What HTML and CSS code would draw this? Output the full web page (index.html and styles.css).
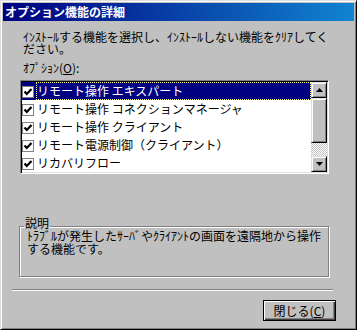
FILE: index.html
```html
<!DOCTYPE html>
<html lang="ja">
<head>
<meta charset="utf-8">
<title>オプション機能の詳細</title>
<link rel="stylesheet" href="styles.css">
</head>
<body>
<div class="window">
  <div class="titlebar">オプション機能の詳細</div>
  <div class="content">
    <p class="intro">ｲﾝｽﾄｰﾙする機能を選択し、ｲﾝｽﾄｰﾙしない機能をｸﾘｱしてく<br>ださい。</p>
    <div class="field-label">ｵﾌﾟｼｮﾝ(<u>O</u>):</div>
    <div class="listbox">
      <ul class="items">
        <li class="item selected"><span class="check"><svg width="10" height="10" viewBox="0 0 10 10"><polyline points="1.5,4.5 3.8,7 8.5,2" fill="none" stroke="#000" stroke-width="2.2"/></svg></span><span class="item-text">リモート操作 エキスパート</span></li>
        <li class="item"><span class="check"><svg width="10" height="10" viewBox="0 0 10 10"><polyline points="1.5,4.5 3.8,7 8.5,2" fill="none" stroke="#000" stroke-width="2.2"/></svg></span><span class="item-text">リモート操作 コネクションマネージャ</span></li>
        <li class="item"><span class="check"><svg width="10" height="10" viewBox="0 0 10 10"><polyline points="1.5,4.5 3.8,7 8.5,2" fill="none" stroke="#000" stroke-width="2.2"/></svg></span><span class="item-text">リモート操作 クライアント</span></li>
        <li class="item"><span class="check"><svg width="10" height="10" viewBox="0 0 10 10"><polyline points="1.5,4.5 3.8,7 8.5,2" fill="none" stroke="#000" stroke-width="2.2"/></svg></span><span class="item-text">リモート電源制御（クライアント）</span></li>
        <li class="item"><span class="check"><svg width="10" height="10" viewBox="0 0 10 10"><polyline points="1.5,4.5 3.8,7 8.5,2" fill="none" stroke="#000" stroke-width="2.2"/></svg></span><span class="item-text">リカバリフロー</span></li>
      </ul>
      <div class="scrollbar">
        <div class="sb-btn"><svg width="7" height="4" viewBox="0 0 7 4"><polygon points="3.5,0 7,4 0,4" fill="#000"/></svg></div>
        <div class="sb-thumb"></div>
        <div class="sb-track"></div>
        <div class="sb-btn"><svg width="7" height="4" viewBox="0 0 7 4"><polygon points="0,0 7,0 3.5,4" fill="#000"/></svg></div>
      </div>
    </div>
    <fieldset class="group">
      <legend class="group-label">説明</legend>
      <p class="desc">ﾄﾗﾌﾞﾙが発生したｻｰﾊﾞやｸﾗｲｱﾝﾄの画面を遠隔地から操作<br>する機能です。</p>
    </fieldset>
    <div class="separator"></div>
    <div class="footer">
      <button class="btn btn-default" type="button">閉じる(<u>C</u>)</button>
    </div>
  </div>
</div>
</body>
</html>
```
FILE: styles.css
```css
* { box-sizing: border-box; }
html, body { margin: 0; padding: 0; }
body {
  width: 357px;
  height: 330px;
  overflow: hidden;
  background: #c0c0c0;
  font-family: "Noto Sans CJK JP", sans-serif;
  font-size: 12px;
  color: #000;
}
.window {
  width: 357px;
  height: 330px;
  background: #c0c0c0;
  border: 1px solid;
  border-color: #dfdfdf #000 #000 #dfdfdf;
  box-shadow: inset 1px 1px #fff, inset -1px -1px #808080;
  padding: 2px;
}
.titlebar {
  height: 18px;
  line-height: 18px;
  padding-left: 2px;
  background: linear-gradient(to right, #000080, #1084d0);
  color: #fff;
  font-weight: bold;
  white-space: nowrap;
}
.content { padding-top: 10px; }
.intro {
  margin: 0 0 0 20px;
  line-height: 12px;
  white-space: nowrap;
}
.field-label {
  margin: 7px 0 0 20px;
  line-height: 12px;
}
.listbox {
  margin: 6px 0 0 17px;
  width: 309px;
  height: 94px;
  display: flex;
  background: #fff;
  border: 1px solid;
  border-color: #808080 #fff #fff #808080;
  box-shadow: inset 1px 1px #000, inset -1px -1px #dfdfdf;
  padding: 1px;
}
.items {
  list-style: none;
  margin: 0;
  padding: 0;
  flex: 1;
  min-width: 0;
}
.item {
  height: 18px;
  display: flex;
  align-items: center;
  white-space: nowrap;
}
.check {
  flex: none;
  width: 12px;
  height: 12px;
  margin-top: 2px;
  border: 1px solid #808080;
  background: #fff;
  display: flex;
  align-items: center;
  justify-content: center;
}
.check svg { display: block; }
.item-text {
  flex: 1;
  height: 18px;
  line-height: 18px;
  margin-left: 2px;
  padding-left: 1px;
}
.selected { background: #000080; color: #fff; }
.selected .item-text {
  outline: 1px dotted #ffff80;
  outline-offset: -1px;
}
.scrollbar {
  flex: none;
  width: 16px;
  display: flex;
  flex-direction: column;
}
.sb-btn, .sb-thumb {
  flex: none;
  background: #c0c0c0;
  border: 1px solid;
  border-color: #dfdfdf #000 #000 #dfdfdf;
  box-shadow: inset 1px 1px #fff, inset -1px -1px #808080;
}
.sb-btn {
  height: 16px;
  display: flex;
  align-items: center;
  justify-content: center;
}
.sb-btn svg { display: block; }
.sb-thumb { height: 45px; }
.sb-track {
  flex: 1;
  background: repeating-conic-gradient(#fff 0 25%, #c0c0c0 0 50%) 0 0 / 2px 2px;
}
.group {
  margin: 43px 0 0 16px;
  width: 310px;
  min-width: 0;
  padding: 0 6px 21px 7px;
  border: 1px solid #808080;
  box-shadow: inset 1px 1px #fff, 1px 1px #fff;
}
.group-label {
  margin-left: -3px;
  padding: 0 1px 6px;
  line-height: 12px;
  background: #c0c0c0;
  background-clip: content-box;
}
.desc {
  margin: -6px 0 0;
  line-height: 13px;
  white-space: nowrap;
}
.separator {
  margin: 12px 0 0 9px;
  width: 321px;
  height: 2px;
  border-top: 1px solid #808080;
  border-bottom: 1px solid #fff;
}
.footer {
  display: flex;
  justify-content: flex-end;
  padding-right: 18px;
  margin-top: 9px;
}
.btn {
  width: 73px;
  height: 21px;
  padding: 0;
  font: inherit;
  line-height: 19px;
  color: #000;
  background: #c0c0c0;
  border: 1px solid #000;
  box-shadow: inset 1px 1px #fff, inset -1px -1px #404040, inset -2px -2px #808080;
}
```
